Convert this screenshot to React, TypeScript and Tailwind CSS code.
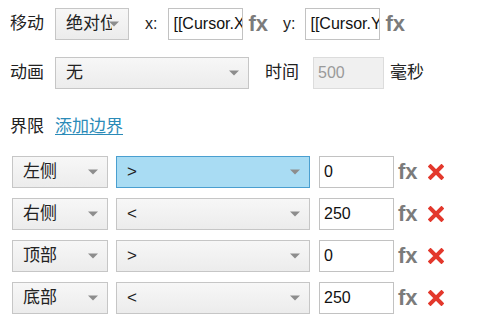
import React from 'react';

const font = { fontFamily: '"Liberation Sans", "Noto Sans CJK SC", sans-serif' };

function Arrow() {
  return (
    <span className="absolute right-[9px] top-1/2 -translate-y-1/2 w-0 h-0 border-l-[5px] border-r-[5px] border-t-[5px] border-l-transparent border-r-transparent border-t-[#8d8d8d]" />
  );
}

function Select({ value, width, active = false }: { value: string; width: string; active?: boolean }) {
  return (
    <div
      className={`relative h-[32px] ${width} shrink-0 border overflow-hidden ${
        active ? 'border-[#4a9fd0] bg-[#a9dcf3]' : 'border-[#c6c6c6] bg-gradient-to-b from-[#f7f7f7] to-[#ececec]'
      }`}
    >
      <div className="absolute left-0 top-0 bottom-0 right-[16px] overflow-hidden whitespace-nowrap pl-[10px] leading-[30px] text-[17px] text-[#222]">
        {value}
      </div>
      <Arrow />
    </div>
  );
}

function Input({ value, width, disabled = false }: { value: string; width: string; disabled?: boolean }) {
  return (
    <div
      className={`h-[32px] ${width} shrink-0 border overflow-hidden whitespace-nowrap pl-[4px] leading-[30px] text-[16px] ${
        disabled ? 'border-[#dcdcdc] bg-[#f0f0f0] text-[#9a9a9a]' : 'border-[#c2c2c2] bg-white text-[#111]'
      }`}
    >
      {value}
    </div>
  );
}

function Fx({ className = '' }: { className?: string }) {
  return <span className={`font-bold text-[22px] text-[#7b7b7b] leading-none ${className}`}>fx</span>;
}

function RemoveIcon() {
  return (
    <svg width="16" height="16" viewBox="0 0 16 16" className="ml-[10px]">
      <path d="M2.5 2.5 L13.5 13.5 M13.5 2.5 L2.5 13.5" stroke="#e3382c" strokeWidth="4" strokeLinecap="square" />
    </svg>
  );
}

const bounds = [
  { side: '左侧', op: '>', value: '0', active: true },
  { side: '右侧', op: '<', value: '250' },
  { side: '顶部', op: '>', value: '0' },
  { side: '底部', op: '<', value: '250' },
];

export default function App() {
  return (
    <div className="w-[498px] h-[323px] bg-white pl-[10px] pt-[8px] text-[#222]" style={font}>
      <div className="flex items-center h-[32px]">
        <span className="w-[45px] text-[17px]">移动</span>
        <Select value="绝对位置" width="w-[74px]" />
        <span className="ml-[16px] text-[16px]">x:</span>
        <div className="ml-[11px]">
          <Input value="[[Cursor.X]]" width="w-[75px]" />
        </div>
        <Fx className="ml-[5px]" />
        <span className="ml-[15px] text-[16px]">y:</span>
        <div className="ml-[10px]">
          <Input value="[[Cursor.Y]]" width="w-[75px]" />
        </div>
        <Fx className="ml-[5px]" />
      </div>

      <div className="flex items-center h-[32px] mt-[17px]">
        <span className="w-[45px] text-[17px]">动画</span>
        <Select value="无" width="w-[194px]" />
        <span className="ml-[16px] w-[48px] text-[17px]">时间</span>
        <Input value="500" width="w-[71px]" disabled />
        <span className="ml-[6px] text-[17px]">毫秒</span>
      </div>

      <div className="flex items-center h-[24px] mt-[26px] text-[17px]">
        <span className="w-[45px]">界限</span>
        <a href="#" className="text-[#2b8bb8] underline underline-offset-2">添加边界</a>
      </div>

      <div className="flex flex-col gap-[10px] mt-[17px] pl-[2px]">
        {bounds.map((b) => (
          <div key={b.side} className="flex items-center">
            <Select value={b.side} width="w-[96px]" />
            <div className="ml-[8px]">
              <Select value={b.op} width="w-[194px]" active={b.active} />
            </div>
            <div className="ml-[9px]">
              <Input value={b.value} width="w-[75px]" />
            </div>
            <Fx className="ml-[4px]" />
            <RemoveIcon />
          </div>
        ))}
      </div>
    </div>
  );
}
